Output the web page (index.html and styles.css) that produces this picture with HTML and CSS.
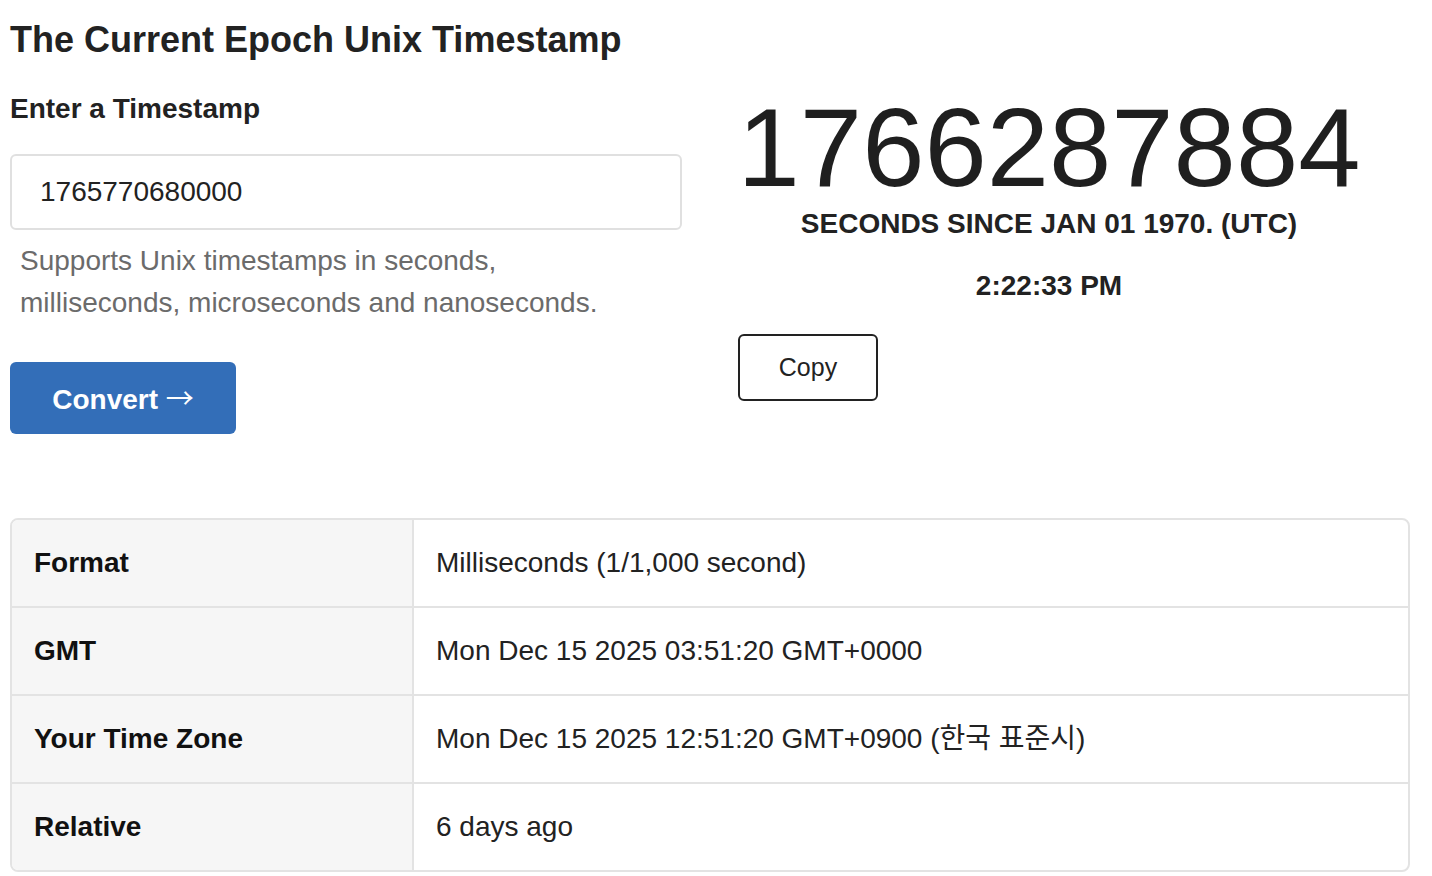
FILE: index.html
```html
<!DOCTYPE html>
<html lang="en">
<head>
    <meta charset="UTF-8">
    <meta name="viewport" content="width=device-width, initial-scale=1.0">
    <title>Epoch Unix Timestamp</title>
    <link rel="stylesheet" href="styles.css">
</head>
<body>
    <h1 class="page-title">The Current Epoch Unix Timestamp</h1>

    <div class="top">
        <div class="converter">
            <h2 class="label">Enter a Timestamp</h2>
            <input type="text" class="ts-input" value="1765770680000">
            <p class="hint">Supports Unix timestamps in seconds, milliseconds, microseconds and nanoseconds.</p>
            <button class="convert-btn">Convert <span class="arrow">&rarr;</span></button>
        </div>

        <div class="clock">
            <div class="epoch">1766287884</div>
            <div class="since">SECONDS SINCE JAN 01 1970. (UTC)</div>
            <div class="time">2:22:33 PM</div>
            <button class="copy-btn">Copy</button>
        </div>
    </div>

    <table class="result">
        <tr>
            <th>Format</th>
            <td>Milliseconds (1/1,000 second)</td>
        </tr>
        <tr>
            <th>GMT</th>
            <td>Mon Dec 15 2025 03:51:20 GMT+0000</td>
        </tr>
        <tr>
            <th>Your Time Zone</th>
            <td>Mon Dec 15 2025 12:51:20 GMT+0900 (한국 표준시)</td>
        </tr>
        <tr>
            <th>Relative</th>
            <td>6 days ago</td>
        </tr>
    </table>
</body>
</html>
```

FILE: styles.css
```css
body {
    margin: 0;
    padding: 0 10px;
    background-color: #fff;
    color: #222;
    font-family: "Liberation Sans", Arial, "Noto Sans CJK KR", sans-serif;
}
.page-title {
    font-size: 36px;
    font-weight: bold;
    margin: 0;
    padding-top: 20px;
    line-height: 40px;
}
.top {
    display: flex;
    gap: 56px;
}
.converter {
    width: 672px;
}
.label {
    font-size: 28px;
    font-weight: bold;
    margin: 0;
    padding-top: 32px;
    line-height: 34px;
}
.ts-input {
    display: block;
    box-sizing: border-box;
    width: 100%;
    height: 76px;
    margin-top: 28px;
    padding: 0 28px;
    border: 2px solid #e0e0e0;
    border-radius: 6px;
    font-family: inherit;
    font-size: 28px;
    color: #222;
}
.hint {
    width: 600px;
    margin: 10px 0 0;
    padding-left: 10px;
    font-size: 28px;
    line-height: 42px;
    color: #6b6b6b;
}
.convert-btn {
    margin-top: 38px;
    width: 226px;
    height: 72px;
    border: none;
    border-radius: 6px;
    background-color: #336eb8;
    color: #fff;
    font-family: inherit;
    font-size: 28px;
    font-weight: bold;
    line-height: 34px;
}
.arrow {
    font-family: "Noto Sans CJK KR", sans-serif;
    font-weight: normal;
    font-size: 28px;
}
.clock {
    width: 622px;
    display: flex;
    flex-direction: column;
    align-items: center;
}
.epoch {
    font-size: 112px;
    line-height: 112px;
    margin-top: 32px;
    color: #1f1f1f;
}
.since {
    font-size: 28px;
    font-weight: bold;
    margin-top: 4px;
}
.time {
    font-size: 28px;
    font-weight: bold;
    margin-top: 30px;
}
.copy-btn {
    align-self: flex-start;
    margin-top: 32px;
    width: 140px;
    height: 67px;
    background-color: #fff;
    border: 2px solid #222;
    border-radius: 6px;
    font-family: inherit;
    font-size: 25px;
    color: #222;
}
.result {
    margin-top: 84px;
    width: 1400px;
    border-collapse: separate;
    border-spacing: 0;
    border: 2px solid #e3e3e3;
    border-radius: 8px;
    overflow: hidden;
}
.result th,
.result td {
    height: 86px;
    padding: 0 22px;
    font-size: 28px;
    line-height: 34px;
    text-align: left;
    border-bottom: 2px solid #e3e3e3;
}
.result tr:last-child th,
.result tr:last-child td {
    border-bottom: none;
}
.result th {
    width: 356px;
    background-color: #f6f6f6;
    border-right: 2px solid #e3e3e3;
    color: #111;
}
.result td {
    color: #222;
}
```
